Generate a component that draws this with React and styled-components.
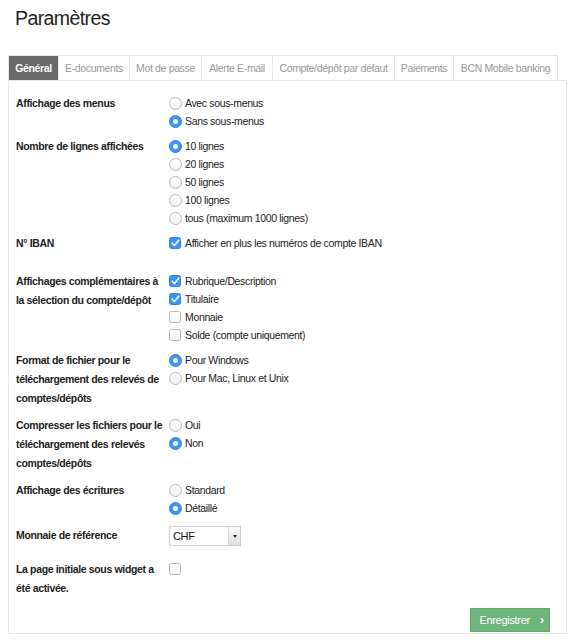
import React from 'react'
import styled, { createGlobalStyle } from 'styled-components'

const GlobalStyle = createGlobalStyle`
  body {
    margin: 0;
    background: #fff;
    font-family: "Liberation Sans", Arial, sans-serif;
    font-size: 10.5px;
    letter-spacing: -0.35px;
    color: #222;
  }
`

const Page = styled.div`
  width: 575px;
  padding: 0 8px;
  box-sizing: border-box;
`

const Title = styled.h1`
  margin: 0;
  padding: 7px 0 0 7px;
  height: 55px;
  box-sizing: border-box;
  font-size: 19.5px;
  font-weight: normal;
  color: #222;
  letter-spacing: -0.6px;
`

const Tabs = styled.div`
  display: flex;
`

const Tab = styled.div`
  height: 25px;
  display: flex;
  align-items: center;
  justify-content: center;
  width: ${p => p.$w}px;
  box-sizing: border-box;
  white-space: nowrap;
  border: 1px solid #e6e6e6;
  border-bottom: none;
  border-left: ${p => (p.$first ? '1px solid #e6e6e6' : 'none')};
  background: ${p => (p.$active ? '#696969' : '#fff')};
  color: ${p => (p.$active ? '#fff' : '#9a9a9a')};
  font-weight: ${p => (p.$active ? 'bold' : 'normal')};
`

const Panel = styled.div`
  width: 559px;
  box-sizing: border-box;
  border: 1px solid #e6e6e6;
  padding: 13px 0 1px 7px;
`

const Row = styled.div`
  display: grid;
  grid-template-columns: 153px 1fr;
  margin-bottom: ${p => p.$mb ?? 8}px;
`

const Label = styled.div`
  font-weight: bold;
  line-height: 19px;
  color: #222;
  padding-right: 4px;
`

const Options = styled.div`
  display: flex;
  flex-direction: column;
`

const Option = styled.div`
  display: flex;
  align-items: center;
  height: 18px;
  color: #222;
  gap: 3px;
`

const RadioMark = styled.span`
  width: 13px;
  height: 13px;
  border-radius: 50%;
  box-sizing: border-box;
  flex: none;
  position: relative;
  background: ${p => (p.$on ? '#3b95f5' : 'linear-gradient(#fff, #f2f2f2)')};
  border: 1px solid ${p => (p.$on ? '#2f86e6' : '#b9b9b9')};
  &::after {
    content: '';
    display: ${p => (p.$on ? 'block' : 'none')};
    position: absolute;
    left: 50%;
    top: 50%;
    width: 5px;
    height: 5px;
    margin: -2.5px 0 0 -2.5px;
    border-radius: 50%;
    background: #fff;
  }
`

const BoxMark = styled.span`
  width: 12px;
  height: 12px;
  border-radius: 2.5px;
  box-sizing: border-box;
  flex: none;
  display: flex;
  align-items: center;
  justify-content: center;
  margin-right: 1px;
  background: ${p => (p.$on ? '#3b95f5' : 'linear-gradient(#fff, #f5f5f5)')};
  border: 1px solid ${p => (p.$on ? '#2f86e6' : '#b5b5b5')};
`

const Radio = ({ on, children }) => (
  <Option>
    <RadioMark $on={on} />
    {children}
  </Option>
)

const Check = ({ on, children }) => (
  <Option>
    <BoxMark $on={on}>
      {on && (
        <svg width="9" height="8" viewBox="0 0 9 8">
          <path d="M1.2 4.2 L3.5 6.5 L7.8 1.2" fill="none" stroke="#fff" strokeWidth="1.6" strokeLinecap="round" strokeLinejoin="round" />
        </svg>
      )}
    </BoxMark>
    {children}
  </Option>
)

const Select = styled.div`
  width: 72px;
  height: 20px;
  box-sizing: border-box;
  border: 1px solid #cfcfcf;
  display: flex;
  align-items: stretch;
  color: #111;
  font-size: 11px;
`

const SelectValue = styled.div`
  flex: 1;
  display: flex;
  align-items: center;
  padding-left: 3px;
`

const SelectArrow = styled.div`
  width: 11px;
  border-left: 1px solid #d8d8d8;
  background: linear-gradient(#fafafa, #dedede);
  display: flex;
  align-items: center;
  justify-content: center;
  &::after {
    content: '';
    border-left: 2.5px solid transparent;
    border-right: 2.5px solid transparent;
    border-top: 3px solid #222;
  }
`

const Footer = styled.div`
  display: flex;
  justify-content: flex-end;
  padding-right: 16px;
  margin-top: 10px;
`

const Button = styled.button`
  width: 80px;
  height: 24px;
  border: 1px solid #63aa70;
  background: #6db57b;
  color: #fff;
  font-family: "Liberation Sans", Arial, sans-serif;
  font-size: 11px;
  letter-spacing: -0.3px;
  display: flex;
  align-items: center;
  justify-content: center;
  gap: 10px;
  padding: 0 0 0 3px;
  cursor: pointer;
`

const Chevron = styled.span`
  font-weight: bold;
  font-size: 12px;
  line-height: 1;
`

const tabs = [
  ['Général', 51],
  ['E-documents', 71],
  ['Mot de passe', 72],
  ['Alerte E-mail', 71],
  ['Compte/dépôt par défaut', 122],
  ['Paiements', 59],
  ['BCN Mobile banking', 104],
]

const App = () => (
  <Page>
    <GlobalStyle />
    <Title>Paramètres</Title>
    <Tabs>
      {tabs.map(([t, w], i) => (
        <Tab key={t} $w={w} $first={i === 0} $active={i === 0}>{t}</Tab>
      ))}
    </Tabs>
    <Panel>
      <Row $mb={7}>
        <Label>Affichage des menus</Label>
        <Options>
          <Radio>Avec sous-menus</Radio>
          <Radio on>Sans sous-menus</Radio>
        </Options>
      </Row>
      <Row $mb={7}>
        <Label>Nombre de lignes affichées</Label>
        <Options>
          <Radio on>10 lignes</Radio>
          <Radio>20 lignes</Radio>
          <Radio>50 lignes</Radio>
          <Radio>100 lignes</Radio>
          <Radio>tous (maximum 1000 lignes)</Radio>
        </Options>
      </Row>
      <Row $mb={19}>
        <Label>N° IBAN</Label>
        <Options>
          <Check on>Afficher en plus les numéros de compte IBAN</Check>
        </Options>
      </Row>
      <Row $mb={7}>
        <Label>Affichages complémentaires à la sélection du compte/dépôt</Label>
        <Options>
          <Check on>Rubrique/Description</Check>
          <Check on>Titulaire</Check>
          <Check>Monnaie</Check>
          <Check>Solde (compte uniquement)</Check>
        </Options>
      </Row>
      <Row $mb={8}>
        <Label>Format de fichier pour le téléchargement des relevés de comptes/dépôts</Label>
        <Options>
          <Radio on>Pour Windows</Radio>
          <Radio>Pour Mac, Linux et Unix</Radio>
        </Options>
      </Row>
      <Row $mb={8}>
        <Label>Compresser les fichiers pour le téléchargement des relevés comptes/dépôts</Label>
        <Options>
          <Radio>Oui</Radio>
          <Radio on>Non</Radio>
        </Options>
      </Row>
      <Row $mb={9}>
        <Label>Affichage des écritures</Label>
        <Options>
          <Radio>Standard</Radio>
          <Radio on>Détaillé</Radio>
        </Options>
      </Row>
      <Row $mb={14}>
        <Label>Monnaie de référence</Label>
        <Options>
          <Select>
            <SelectValue>CHF</SelectValue>
            <SelectArrow />
          </Select>
        </Options>
      </Row>
      <Row $mb={0}>
        <Label>La page initiale sous widget a été activée.</Label>
        <Options>
          <Check />
        </Options>
      </Row>
      <Footer>
        <Button>
          Enregistrer <Chevron>›</Chevron>
        </Button>
      </Footer>
    </Panel>
  </Page>
)

export default App
